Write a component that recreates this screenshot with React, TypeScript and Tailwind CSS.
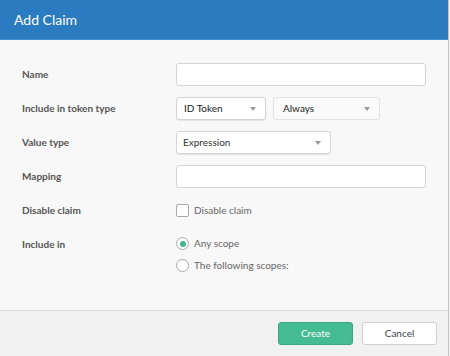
import React from "react";

function Caret() {
  return (
    <svg width="6" height="4" viewBox="0 0 6 4" className="shrink-0">
      <path d="M0 0 L6 0 L3 4 Z" fill="#9a9a9a" />
    </svg>
  );
}

function Label({ children }: { children: React.ReactNode }) {
  return (
    <div className="w-[154px] shrink-0 text-[10px] font-bold text-[#555]">{children}</div>
  );
}

export default function App() {
  return (
    <div
      className="w-[450px] h-[356px] flex flex-col bg-[#f1f1f1] overflow-hidden"
      style={{ fontFamily: 'Lato, "Liberation Sans", sans-serif' }}
    >
      <div className="w-[449px] h-full flex flex-col border-r border-[#c8c8c8]">
        <div className="h-[40px] shrink-0 bg-[#2a7bc0] flex items-center px-[14px] border-b border-[#3f8fd1]">
          <span className="text-white text-[14px]">Add Claim</span>
        </div>
        <div className="h-[271px] shrink-0 bg-[#f8f8f8] border-b border-[#dcdcdc] pl-[22px] pt-[23px] flex flex-col">
          <div className="flex items-center h-[23px]">
            <Label>Name</Label>
            <div className="w-[250px] h-[23px] bg-white border border-[#d4d4d4] rounded-[3px]" />
          </div>
          <div className="flex items-center h-[23px] mt-[11px]">
            <Label>Include in token type</Label>
            <div className="w-[90px] h-[23px] bg-white border border-[#d4d4d4] rounded-[3px] shadow-[0_1px_1px_rgba(0,0,0,0.08)] flex items-center justify-between pl-[7px] pr-[9px]">
              <span className="text-[10px] text-[#222]">ID Token</span>
              <Caret />
            </div>
            <div className="ml-[7px] w-[107px] h-[23px] bg-[#fafafa] border border-[#e2e2e2] rounded-[3px] flex items-center justify-between pl-[9px] pr-[9px]">
              <span className="text-[10px] text-[#222]">Always</span>
              <Caret />
            </div>
          </div>
          <div className="flex items-center h-[23px] mt-[11px]">
            <Label>Value type</Label>
            <div className="w-[155px] h-[23px] bg-white border border-[#d4d4d4] rounded-[3px] shadow-[0_1px_1px_rgba(0,0,0,0.08)] flex items-center justify-between pl-[6px] pr-[9px]">
              <span className="text-[10px] text-[#333]">Expression</span>
              <Caret />
            </div>
          </div>
          <div className="flex items-center h-[23px] mt-[11px]">
            <Label>Mapping</Label>
            <div className="w-[250px] h-[23px] bg-white border border-[#d4d4d4] rounded-[3px]" />
          </div>
          <div className="flex items-center h-[13px] mt-[16px]">
            <Label>Disable claim</Label>
            <div className="flex items-center">
              <div className="w-[13px] h-[13px] bg-white border border-[#aaa] rounded-[2px]" />
              <span className="ml-[5px] text-[10px] text-[#666]">Disable claim</span>
            </div>
          </div>
          <div className="flex items-start mt-[20px]">
            <Label>Include in</Label>
            <div className="flex flex-col gap-[9px]">
              <div className="flex items-center h-[13px]">
                <div className="w-[13px] h-[13px] rounded-full bg-white border border-[#aaa] flex items-center justify-center">
                  <div className="w-[6px] h-[6px] rounded-full bg-[#3fb78a]" />
                </div>
                <span className="ml-[5px] text-[10px] text-[#666]">Any scope</span>
              </div>
              <div className="flex items-center h-[13px]">
                <div className="w-[13px] h-[13px] rounded-full bg-white border border-[#aaa]" />
                <span className="ml-[5px] text-[10px] text-[#666]">The following scopes:</span>
              </div>
            </div>
          </div>
        </div>
        <div className="flex-1 bg-[#f1f1f1] flex items-start justify-end pt-[11px] pr-[11px] gap-[9px]">
          <button className="w-[75px] h-[23px] bg-[#45bb94] border border-[#3aa881] rounded-[3px] text-white text-[10px]">
            Create
          </button>
          <button className="w-[75px] h-[23px] bg-white border border-[#d0d0d0] rounded-[3px] text-[#444] text-[10px]">
            Cancel
          </button>
        </div>
      </div>
    </div>
  );
}
